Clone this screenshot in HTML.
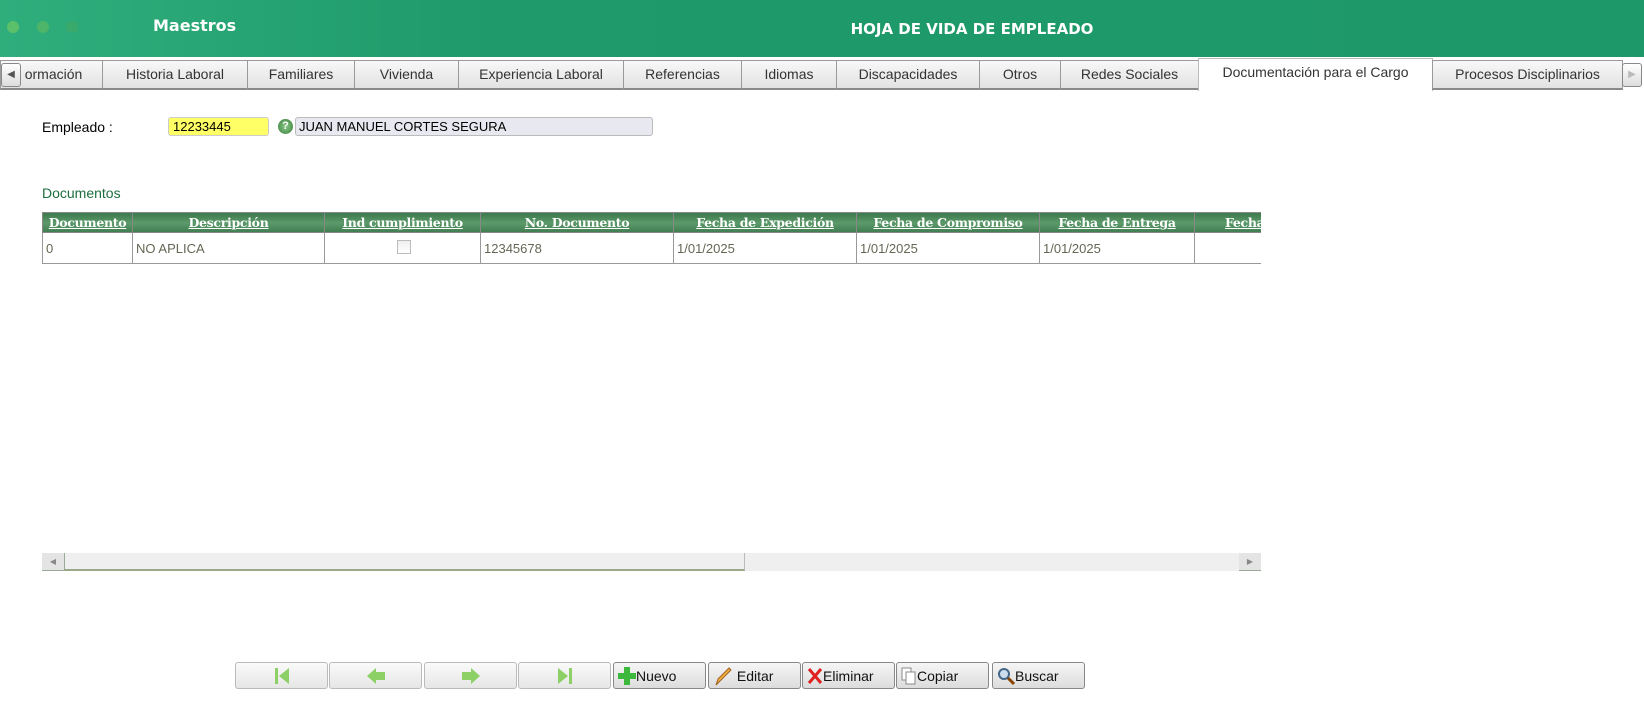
<!DOCTYPE html>
<html><head><meta charset="utf-8"><style>
*{box-sizing:border-box;margin:0;padding:0}
body{width:1644px;height:706px;background:#fff;font-family:"Liberation Sans",sans-serif;position:relative;overflow:hidden}
.hdr{position:absolute;left:0;top:0;width:1644px;height:57px;background:linear-gradient(90deg,#2fae7c 0%,#1f9a6a 30%,#1d9868 100%)}
.dot{position:absolute;top:21px;width:12px;height:12px;border-radius:50%}
.h1{position:absolute;left:153px;top:16px;color:#fff;font:bold 16px "DejaVu Sans",sans-serif}
.h2{position:absolute;left:0;width:1944px;text-align:center;top:20px;color:#fff;font:bold 15px "DejaVu Sans",sans-serif}
.tabs{position:absolute;top:58px;left:0;width:1644px;height:32px;background:#fff}
.tab{position:absolute;top:2px;height:30px;border:1px solid #9a9a9a;border-bottom:2px solid #8a8a8a;background:linear-gradient(#f8f8f8,#e2e2e2);font-size:14px;color:#333;text-align:center;line-height:26px;white-space:nowrap;overflow:hidden}
.tab.act{background:#fff;top:0;height:33px;border-bottom:none;border-color:#bbb}
.arr{position:absolute;top:5px;width:20px;height:24px;border:1px solid #888;border-radius:3px;background:linear-gradient(#fff,#ddd);font-size:10px;line-height:22px;text-align:center;color:#555}
.lbl{position:absolute;font-size:14px;color:#000}
table{position:absolute;left:42px;top:212px;border-collapse:collapse;font-size:13px;table-layout:fixed}
th{height:20px;background:linear-gradient(#3c7a4e,#5c9a6a 50%,#3f7d52);color:#fff;font:bold 12.5px "DejaVu Serif","Liberation Serif",serif;letter-spacing:-0.3px;text-decoration:underline;border:1px solid #888;white-space:nowrap;overflow:hidden}
td{height:31px;border:1px solid #999;color:#665;padding-left:3px;font-size:13px}
.btn{position:absolute;top:662px;width:93px;height:27px;border:1px solid #bbb;border-radius:3px;background:linear-gradient(#fafafa,#e6e6e6);font-size:14px;color:#111;display:flex;align-items:center;justify-content:center}
.btn.en{border-color:#888;background:linear-gradient(#f6f6f6,#dcdcdc);justify-content:flex-start;padding-left:4px}
</style></head><body>
<div class="hdr">
<div class="dot" style="left:7px;background:#5cc06a"></div>
<div class="dot" style="left:37px;background:#4cb56a"></div>
<div class="dot" style="left:66px;background:#3aa96c"></div>
<div class="h1">Maestros</div>
<div class="h2">HOJA DE VIDA DE EMPLEADO</div>
</div>
<div class="tabs">
<div class="tab" style="left:0;width:103px;padding-left:4px">ormación</div>
<div class="tab" style="left:102px;width:146px">Historia Laboral</div>
<div class="tab" style="left:247px;width:108px">Familiares</div>
<div class="tab" style="left:354px;width:105px">Vivienda</div>
<div class="tab" style="left:458px;width:166px">Experiencia Laboral</div>
<div class="tab" style="left:623px;width:119px">Referencias</div>
<div class="tab" style="left:741px;width:96px">Idiomas</div>
<div class="tab" style="left:836px;width:144px">Discapacidades</div>
<div class="tab" style="left:979px;width:82px">Otros</div>
<div class="tab" style="left:1060px;width:139px">Redes Sociales</div>
<div class="tab act" style="left:1198px;width:235px">Documentación para el Cargo</div>
<div class="tab" style="left:1432px;width:191px">Procesos Disciplinarios</div>
<div class="arr" style="left:1px">&#9664;</div>
<div class="arr" style="left:1622px;color:#bbb">&#9654;</div>
</div>
<div class="lbl" style="left:42px;top:119px">Empleado :</div>
<div style="position:absolute;left:168px;top:117px;width:101px;height:19px;background:#ffff66;border:1px solid #ccc;border-radius:3px;font-size:13px;padding-left:4px;line-height:17px">12233445</div>
<div style="position:absolute;left:278px;top:119px;width:15px;height:15px;border-radius:50%;background:radial-gradient(#8c8,#3a7a3a);color:#fff;font:bold 11px sans-serif;text-align:center;line-height:15px">?</div>
<div style="position:absolute;left:295px;top:117px;width:358px;height:19px;background:#e8e8f0;border:1px solid #bbb;border-radius:3px;font-size:13px;padding-left:3px;line-height:17px">JUAN MANUEL CORTES SEGURA</div>
<div class="lbl" style="left:42px;top:185px;color:#1d6e3e">Documentos</div>
<div style="position:absolute;left:42px;top:212px;width:1219px;height:52px;overflow:hidden">
<table style="left:0;top:0;width:1320px">
<colgroup><col style="width:90px"><col style="width:192px"><col style="width:156px"><col style="width:193px"><col style="width:183px"><col style="width:183px"><col style="width:155px"><col style="width:168px"></colgroup>
<tr><th>Documento</th><th>Descripción</th><th>Ind cumplimiento</th><th>No. Documento</th><th>Fecha de Expedición</th><th>Fecha de Compromiso</th><th>Fecha de Entrega</th><th style="text-align:left;padding-left:30px">Fecha de Vencimiento</th></tr>
<tr><td>0</td><td>NO APLICA</td><td style="text-align:center"><span style="display:inline-block;width:14px;height:14px;border:1px solid #bbb;background:linear-gradient(#eee,#fff)"></span></td><td>12345678</td><td>1/01/2025</td><td>1/01/2025</td><td>1/01/2025</td><td></td></tr>
</table></div>
<div style="position:absolute;left:42px;top:553px;width:1219px;height:18px;background:#efefef"></div>
<div style="position:absolute;left:42px;top:553px;width:22px;height:18px;background:#e4e4e4;border-bottom:1px solid #9a9;font-size:8px;color:#888;line-height:18px;text-align:center">&#9664;</div>
<div style="position:absolute;left:64px;top:553px;width:681px;height:18px;background:#efefef;border-left:1px solid #9a9;border-right:1px solid #bbb;border-bottom:2px solid #9aa88a"></div>
<div style="position:absolute;left:1239px;top:553px;width:22px;height:18px;background:#e4e4e4;border-bottom:1px solid #9a9;font-size:8px;color:#888;line-height:18px;text-align:center">&#9654;</div>
<div class="btn" style="left:235px"><svg width="16" height="18"><rect x="1" y="1" width="3" height="16" fill="#8cd066"/><path d="M15 1L5 9L15 17Z" fill="#8cd066"/></svg></div>
<div class="btn" style="left:329px"><svg width="20" height="18"><path d="M1 9L10 1V5H19V13H10V17Z" fill="#8cd066"/></svg></div>
<div class="btn" style="left:424px"><svg width="20" height="18"><path d="M19 9L10 1V5H1V13H10V17Z" fill="#8cd066"/></svg></div>
<div class="btn" style="left:518px"><svg width="16" height="18"><path d="M1 1L11 9L1 17Z" fill="#8cd066"/><rect x="12" y="1" width="3" height="16" fill="#8cd066"/></svg></div>
<div class="btn en" style="left:613px"><svg width="18" height="18"><path d="M6 0H12V6H18V12H12V18H6V12H0V6H6Z" fill="#3cb83c"/></svg>Nuevo</div>
<div class="btn en" style="left:708px"><svg width="20" height="20"><path d="M3 19L5 13L16 2L18 4L7 15Z" fill="#f0b040" stroke="#a06020" stroke-width="1"/></svg>&nbsp;Editar</div>
<div class="btn en" style="left:802px"><svg width="16" height="18"><path d="M2 2L14 16M14 2L2 16" stroke="#e02020" stroke-width="3"/></svg>Eliminar</div>
<div class="btn en" style="left:896px"><svg width="16" height="18"><rect x="1" y="1" width="9" height="12" fill="#fff" stroke="#888"/><rect x="5" y="5" width="9" height="12" fill="#fff" stroke="#888"/></svg>Copiar</div>
<div class="btn en" style="left:992px"><svg width="18" height="18"><circle cx="7" cy="7" r="5" fill="#cde" stroke="#468" stroke-width="2"/><path d="M11 11L17 17" stroke="#840" stroke-width="3"/></svg>Buscar</div>
</body></html>
